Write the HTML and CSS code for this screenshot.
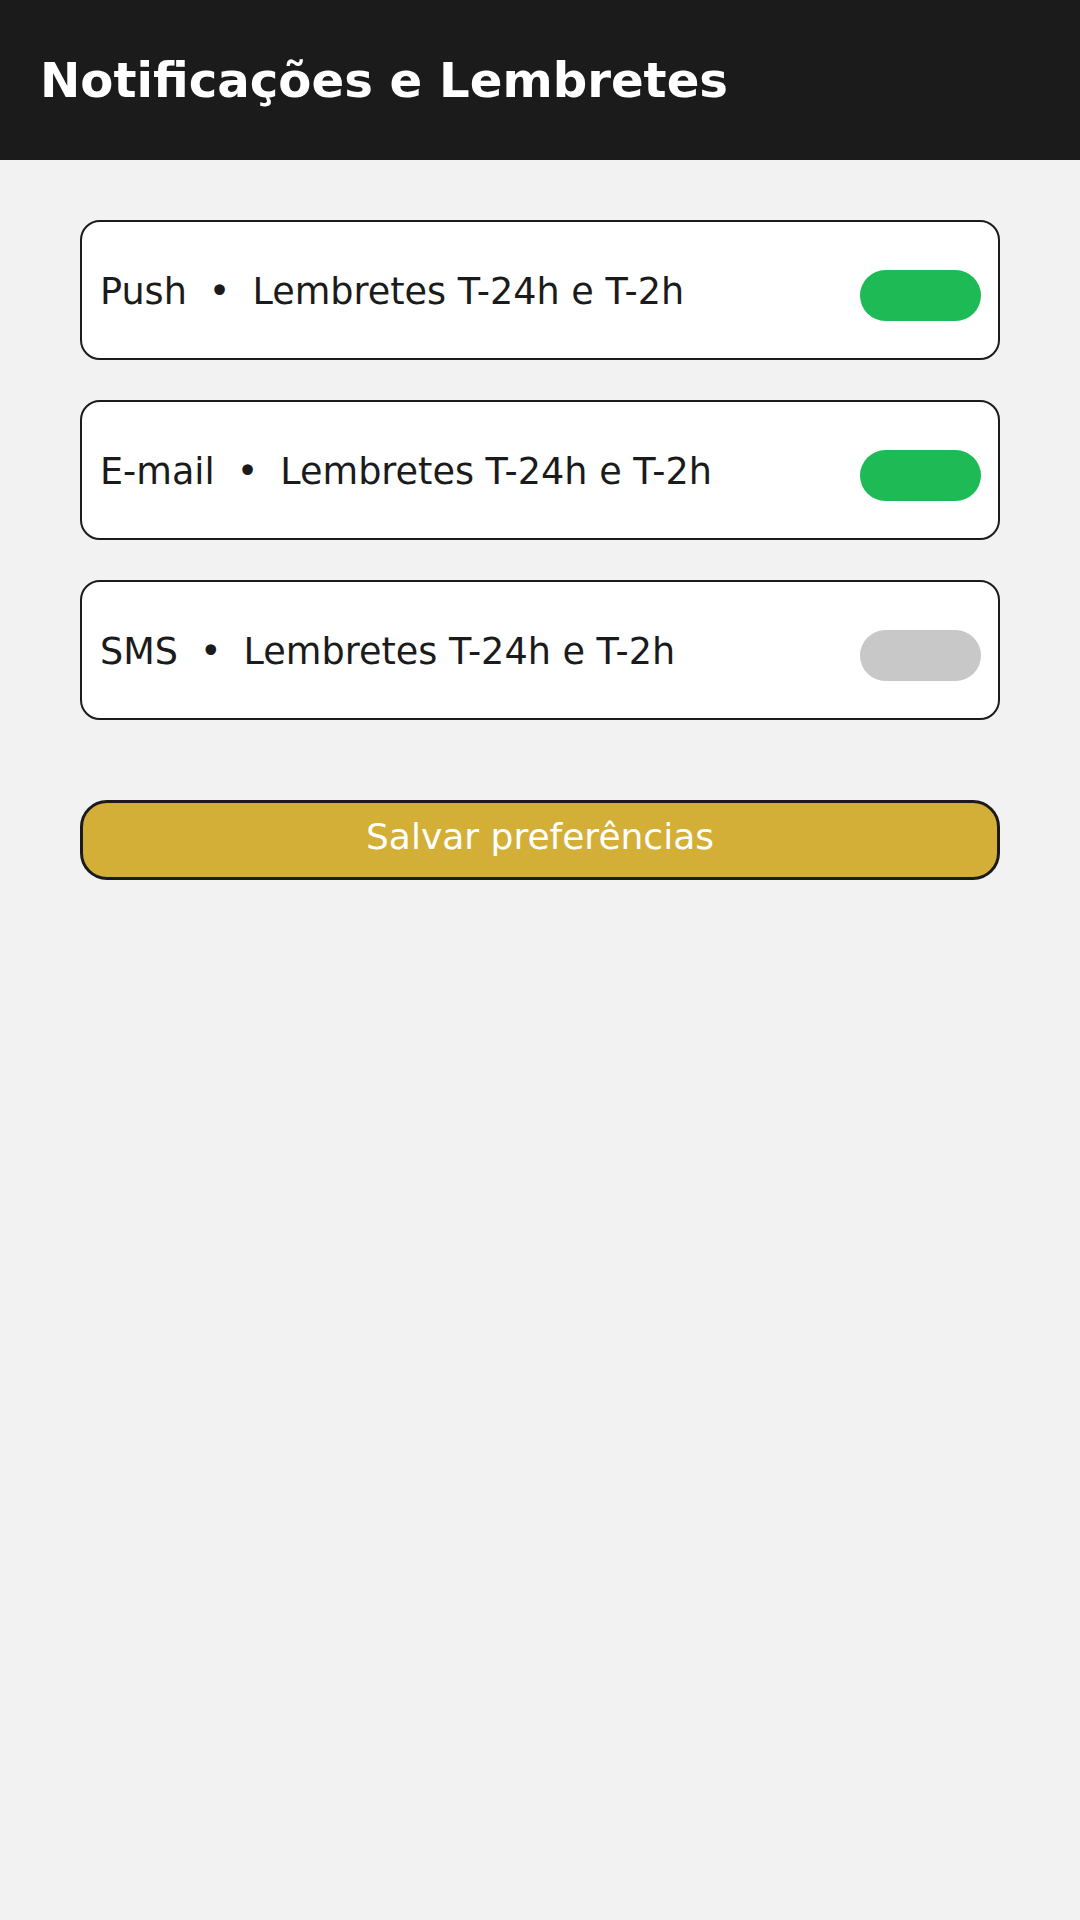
FILE: index.html
```html
<!DOCTYPE html>
<html lang="pt">
<head>
<meta charset="utf-8">
<title>Notificações e Lembretes</title>
<link rel="stylesheet" href="styles.css">
</head>
<body>
<header class="topbar">
  <h1 class="title">Notificações e Lembretes</h1>
</header>
<main class="content">
  <section class="list">
    <div class="card">
      <span class="label">Push<span class="sep">•</span>Lembretes T-24h e T-2h</span>
      <span class="toggle on"></span>
    </div>
    <div class="card">
      <span class="label">E-mail<span class="sep">•</span>Lembretes T-24h e T-2h</span>
      <span class="toggle on"></span>
    </div>
    <div class="card">
      <span class="label">SMS<span class="sep">•</span>Lembretes T-24h e T-2h</span>
      <span class="toggle off"></span>
    </div>
  </section>
  <button class="save" type="button">Salvar preferências</button>
</main>
</body>
</html>
```

FILE: styles.css
```css
* { box-sizing: border-box; }
html, body {
  margin: 0;
  padding: 0;
  background: #f2f2f2;
  font-family: "DejaVu Sans", sans-serif;
  color: #1b1b1b;
}
.topbar {
  height: 160px;
  background: #1b1b1b;
  display: flex;
  align-items: center;
  padding: 0 40px;
}
.title {
  margin: 0;
  color: #ffffff;
  font-size: 48.2px;
  font-weight: bold;
  line-height: 1;
}
.content {
  padding: 60px 80px;
  display: flex;
  flex-direction: column;
  gap: 80px;
}
.list {
  display: flex;
  flex-direction: column;
  gap: 40px;
}
.card {
  height: 140px;
  background: #ffffff;
  border: 2px solid #1b1b1b;
  border-radius: 20px;
  display: flex;
  align-items: center;
  justify-content: space-between;
  padding: 0 17px 0 18px;
}
.label {
  font-size: 36.6px;
  line-height: 1;
  white-space: nowrap;
  margin-top: 5px;
}
.sep {
  margin: 0 22px;
}
.toggle {
  width: 121px;
  height: 51px;
  border-radius: 26px;
  margin-top: 10px;
}
.toggle.on { background: #1eba55; }
.toggle.off { background: #c8c8c8; }
.save {
  height: 80px;
  width: 100%;
  background: #d4af37;
  border: 3px solid #1b1b1b;
  border-radius: 27px;
  color: #ffffff;
  font-family: "DejaVu Sans", sans-serif;
  font-size: 36px;
  line-height: 1;
  padding: 0 0 6px;
  cursor: pointer;
}
```
